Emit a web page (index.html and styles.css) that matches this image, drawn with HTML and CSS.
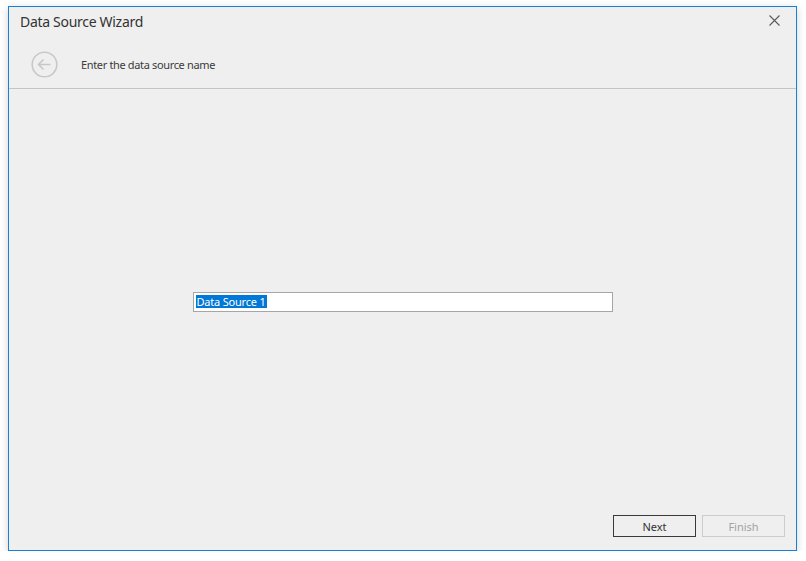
FILE: index.html
```html
<!DOCTYPE html>
<html>
<head>
<meta charset="utf-8">
<link rel="stylesheet" href="styles.css">
</head>
<body>
<div class="window">
  <div class="titlebar">
    <span class="title">Data Source Wizard</span>
    <svg class="close" width="11" height="11" viewBox="0 0 11 11"><path d="M0.5 0.5 L10.5 10.5 M10.5 0.5 L0.5 10.5" stroke="#5a5a5a" stroke-width="1.1" fill="none"/></svg>
  </div>
  <div class="header">
    <svg class="back" width="27" height="27" viewBox="0 0 27 27">
      <circle cx="13.5" cy="13.5" r="12.3" stroke="#c8c8c8" stroke-width="1.6" fill="none"/>
      <path d="M19.5 13.5 H7.5 M12.5 8.5 L7.5 13.5 L12.5 18.5" stroke="#c8c8c8" stroke-width="1.6" fill="none"/>
    </svg>
    <span class="subtitle">Enter the data source name</span>
  </div>
  <div class="main">
    <div class="textbox"><span class="sel">Data Source 1</span></div>
  </div>
  <div class="footer">
    <div class="btn primary">Next</div>
    <div class="btn disabled">Finish</div>
  </div>
</div>
</body>
</html>
```
FILE: styles.css
```css
html, body {
  margin: 0;
  background: #ffffff;
}
body {
  padding: 6px 0 0 8px;
  font-family: "Noto Sans", "Open Sans", sans-serif;
}
.window {
  width: 789px;
  height: 545px;
  box-sizing: border-box;
  border: 1px solid #1a7fd6;
  background: #efefef;
  box-shadow: 0 2px 8px rgba(0, 0, 0, 0.18);
  display: flex;
  flex-direction: column;
}
.titlebar {
  height: 29px;
  display: flex;
  align-items: center;
  justify-content: space-between;
  padding: 0 16px 0 11px;
}
.title {
  font-size: 14px;
  color: #333333;
  letter-spacing: -0.3px;
}
.close {
  display: block;
  margin-top: -2px;
}
.header {
  padding-top: 2px;
  display: flex;
  align-items: center;
  padding-left: 22px;
  border-bottom: 1px solid #c4c4c4;
  box-sizing: border-box;
  height: 53px;
}
.back {
  display: block;
  margin-top: 2px;
}
.subtitle {
  margin-left: 23px;
  font-size: 11px;
  letter-spacing: -0.35px;
  color: #3b3b3b;
  margin-top: 2px;
}
.main {
  flex: 1;
  display: flex;
  justify-content: center;
  align-items: flex-start;
  padding-top: 203px;
}
.textbox {
  width: 420px;
  height: 20px;
  box-sizing: border-box;
  border: 1px solid #a6a6a6;
  background: #ffffff;
  padding: 2px 0 0 2px;
  font-size: 11px;
  line-height: 13px;
}
.sel {
  background: #0078d7;
  color: #ffffff;
  display: inline-block;
  padding: 0 1px;
  letter-spacing: -0.2px;
}
.footer {
  display: flex;
  justify-content: flex-end;
  gap: 6px;
  padding: 0 11px 13px 0;
}
.btn {
  width: 83px;
  height: 22px;
  box-sizing: border-box;
  display: flex;
  align-items: center;
  justify-content: center;
  font-size: 11px;
  background: #efefef;
}
.primary {
  border: 1px solid #3a3a3a;
  color: #333333;
}
.disabled {
  border: 1px solid #cccccc;
  color: #a2a2a2;
}
```
